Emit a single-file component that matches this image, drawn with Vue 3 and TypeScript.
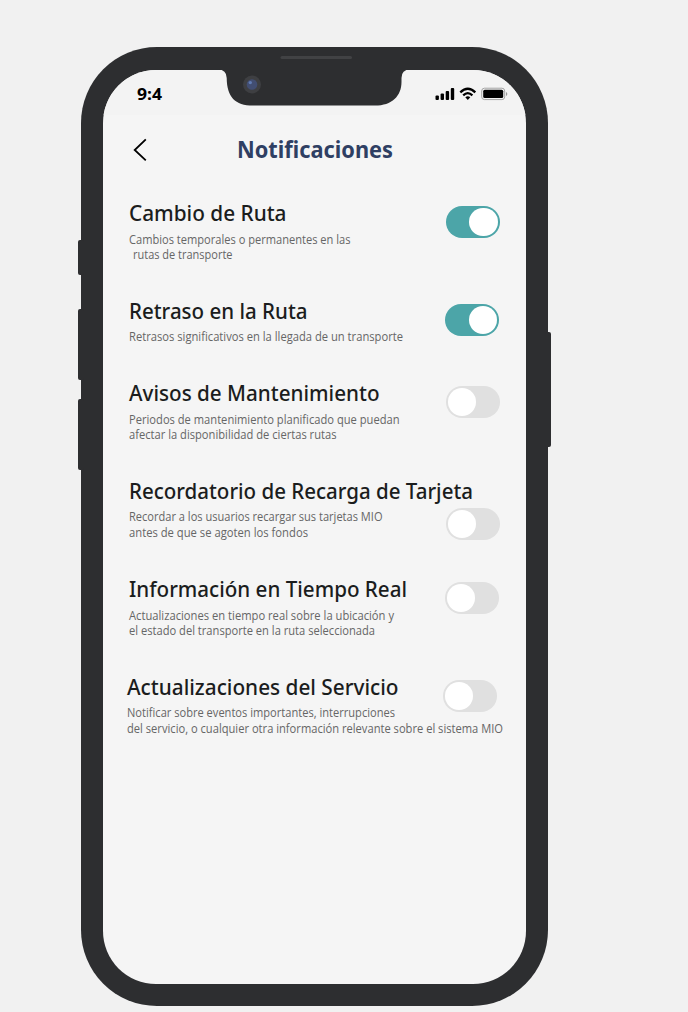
<script setup lang="ts">
import { ref } from 'vue'

interface Line {
  text: string
  width: number
}

interface Setting {
  title: Line
  lines: Line[]
  on: boolean
  kind: string
}

const settings = ref<Setting[]>([
  {
    title: { text: 'Cambio de Ruta', width: 157.5 },
    lines: [
      { text: 'Cambios temporales o permanentes en las', width: 221.5 },
      { text: 'rutas de transporte', width: 99.5 },
    ],
    on: true,
    kind: 'route-change',
  },
  {
    title: { text: 'Retraso en la Ruta', width: 178.5 },
    lines: [{ text: 'Retrasos significativos en la llegada de un transporte', width: 274 }],
    on: true,
    kind: 'delay',
  },
  {
    title: { text: 'Avisos de Mantenimiento', width: 250.5 },
    lines: [
      { text: 'Periodos de mantenimiento planificado que puedan', width: 270.5 },
      { text: 'afectar la disponibilidad de ciertas rutas', width: 207.5 },
    ],
    on: false,
    kind: 'maintenance',
  },
  {
    title: { text: 'Recordatorio de Recarga de Tarjeta', width: 344 },
    lines: [
      { text: 'Recordar a los usuarios recargar sus tarjetas MIO', width: 253.5 },
      { text: 'antes de que se agoten los fondos', width: 179 },
    ],
    on: false,
    kind: 'top-up',
  },
  {
    title: { text: 'Información en Tiempo Real', width: 278 },
    lines: [
      { text: 'Actualizaciones en tiempo real sobre la ubicación y', width: 265 },
      { text: 'el estado del transporte en la ruta seleccionada', width: 246 },
    ],
    on: false,
    kind: 'live',
  },
  {
    title: { text: 'Actualizaciones del Servicio', width: 271.5 },
    lines: [
      { text: 'Notificar sobre eventos importantes, interrupciones', width: 268 },
      { text: 'del servicio, o cualquier otra información relevante sobre el sistema MIO', width: 376 },
    ],
    on: false,
    kind: 'service',
  },
])
</script>

<template>
  <div class="stage">
    <div class="phone">
      <i class="key mute"></i><i class="key vol-up"></i><i class="key vol-down"></i><i class="key power"></i>
      <svg class="notch" width="190" height="60" viewBox="0 0 190 60">
        <path d="M2 22.500H4Q12.500 22.500 12.700 31C12.900 50 21 58.600 39 58.600H161C178 58.600 187.500 49 187.500 35V31Q187.500 22.500 196 22.500V10H2Z" fill="#2d2e30" />
        <rect x="66.500" y="9" width="71.500" height="3" rx="1.500" fill="#414244" />
        <circle cx="38" cy="37.500" r="9" fill="#3e3f42" />
        <circle cx="38" cy="37.500" r="5.300" fill="#424e72" />
        <circle cx="36.300" cy="35.600" r="1.700" fill="#607bb2" />
      </svg>
      <main class="screen">
        <header class="status">
          <svg class="clock" width="30" height="22"><text x="0" y="16.500" textLength="25" lengthAdjust="spacingAndGlyphs">9:4</text></svg>
          <svg class="radios" width="74" height="16" viewBox="0 0 74 16">
            <rect x="0.500" y="9.500" width="3.400" height="4.500" rx="1" />
            <rect x="5.600" y="7.500" width="3.400" height="6.500" rx="1" />
            <rect x="10.700" y="5" width="3.400" height="9" rx="1" />
            <rect x="15.800" y="2" width="3.400" height="12" rx="1" />
            <g fill="none" stroke="#000" stroke-width="2.300">
              <path d="M25.300 6.300Q32.800-.9 40.300 6.300" />
              <path d="M28.200 9.300Q32.800 5 37.400 9.300" />
            </g>
            <path d="M30.300 11.300Q32.800 9.200 35.300 11.300L32.800 13.900Z" />
            <rect x="46.700" y="2.200" width="23" height="11.400" rx="2.800" fill="none" stroke="#a4a4a4" />
            <rect x="48.200" y="3.800" width="20" height="8.200" rx="1.500" />
            <path d="M71 6V10Q72.300 9.400 72.300 8T71 6Z" fill="#999" />
          </svg>
        </header>
        <div class="heading">
          <svg class="back" width="14" height="24" viewBox="0 0 14 24">
            <path d="M12.800 1.300L1.700 12L12.800 22.300" fill="none" stroke="#000" stroke-width="1.800" />
          </svg>
          <svg class="page-title" width="162" height="38"><text x="0" y="25" textLength="156" lengthAdjust="spacingAndGlyphs">Notificaciones</text></svg>
        </div>
        <section v-for="item in settings" :key="item.kind" class="setting" :class="item.kind">
          <div class="copy">
            <svg class="name" height="30" :width="item.title.width + 2">
              <text x="0" y="23" :textLength="item.title.width" lengthAdjust="spacingAndGlyphs">{{ item.title.text }}</text>
            </svg>
            <svg v-for="line in item.lines" :key="line.text" class="line" :width="line.width + 2">
              <text x="0" y="12" :textLength="line.width" lengthAdjust="spacingAndGlyphs">{{ line.text }}</text>
            </svg>
          </div>
          <button class="toggle" :class="{ on: item.on }" role="switch" :aria-checked="item.on" @click="item.on = !item.on">
            <span class="knob"></span>
          </button>
        </section>
      </main>
    </div>
  </div>
</template>

<style>
body {
  background: #f1f1f1;
}
</style>

<style scoped>
.stage {
  height: 1012px;
  overflow: hidden;
  box-sizing: border-box;
  padding: 47px 0 0 80.600px;
  font-family: 'Noto Sans', 'Open Sans', sans-serif;
}
.phone {
  position: relative;
  box-sizing: border-box;
  width: 467.700px;
  height: 959px;
  padding: 22.600px 22.300px 21.700px;
  border-radius: 76px;
  background: #2d2e30;
}
.key {
  position: absolute;
  left: -2.600px;
  width: 6px;
  border-radius: 2px;
  background: #2d2e30;
}
.mute { top: 193px; height: 35px; }
.vol-up { top: 261.500px; height: 71px; }
.vol-down { top: 352.400px; height: 71px; }
.power { left: auto; right: -2.700px; top: 284.500px; height: 115px; }
.notch {
  position: absolute;
  left: 133.400px;
  top: 0;
  overflow: visible;
}
.screen {
  box-sizing: border-box;
  height: 100%;
  border-radius: 53px;
  background: #f5f5f5;
  overflow: hidden;
}
svg {
  display: block;
}
.status {
  display: flex;
  justify-content: space-between;
  height: 45.400px;
  box-sizing: border-box;
  padding: 13.400px 17px 0 34.300px;
  background: #f3f3f3;
}
.clock {
  font-size: 16px;
  font-weight: 700;
}
.radios {
  margin-top: 3px;
}
.heading {
  display: flex;
  align-items: flex-start;
  height: 83px;
  padding-left: 30px;
}
.back {
  margin-top: 23px;
}
.page-title {
  margin: 18px 0 0 89.700px;
  font-size: 24px;
  font-weight: 700;
  fill: #2f3f63;
  overflow: visible;
}
.setting {
  display: flex;
  align-items: flex-start;
  height: 98px;
  padding-left: 26.600px;
}
.copy {
  width: 316.200px;
  flex: none;
}
.copy svg {
  overflow: visible;
}
.name {
  margin-bottom: 4.300px;
  font-size: 22.300px;
  font-weight: 500;
  fill: #1b1d1d;
}
.line {
  height: 15px;
  font-family: 'Open Sans', 'Noto Sans', sans-serif;
  font-size: 11.700px;
  fill: #666;
}
.route-change .line:last-child {
  margin-left: 4px;
}
.delay,
.top-up,
.live {
  padding-left: 25.700px;
}
.delay {
  height: 82px;
}
.delay .name,
.top-up .name {
  margin-bottom: 3.500px;
}
.top-up .line,
.service .line {
  height: 15.800px;
}
.top-up .copy {
  width: 317.100px;
}
.service {
  padding-left: 23.700px;
}
.service .name {
  margin-bottom: 3.500px;
}
.toggle {
  flex: none;
  width: 54.200px;
  height: 32.400px;
  margin: 8px 0 0;
  padding: 2px;
  border: 0;
  border-radius: 17px;
  background: #e0e0e0;
}
.toggle.on {
  background: #4ca5a8;
}
.top-up .toggle {
  margin-top: 32px;
}
.knob {
  display: block;
  width: 28.400px;
  height: 28.400px;
  border-radius: 50%;
  background: #fff;
}
.on .knob {
  margin-left: auto;
}
</style>
